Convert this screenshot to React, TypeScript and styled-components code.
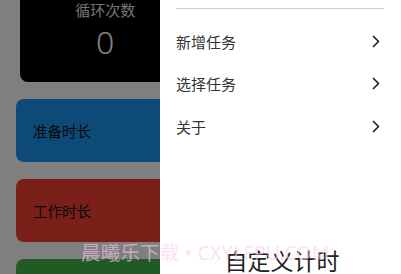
import React from "react";
import styled, { createGlobalStyle } from "styled-components";

const Global = createGlobalStyle`
  html, body { margin: 0; padding: 0; }
  body {
    width: 401px; height: 274px; overflow: hidden; background: #fff;
    font-family: "Noto Sans", "Noto Sans CJK SC", sans-serif;
  }
`;

const Screen = styled.div`
  position: relative;
  width: 401px;
  height: 274px;
  overflow: hidden;
  background: #fff;
`;

const Main = styled.div`
  display: flex;
  flex-direction: column;
  gap: 17px;
  padding: 0 16px;
  margin-top: -12px;
`;

const StatRow = styled.div`
  display: grid;
  grid-template-columns: 1fr 1fr;
  gap: 20px;
  margin: 0 4px;
`;

const StatCard = styled.div`
  height: 94px;
  background: #000;
  border-radius: 8px;
  display: flex;
  flex-direction: column;
  align-items: center;
  padding-top: 12px;
  box-sizing: border-box;
  color: #ffffff;
`;

const StatLabel = styled.div`
  font-size: 15px;
  line-height: 20px;
  opacity: 0.9;
`;

const StatValue = styled.div`
  font-size: 32px;
  line-height: 36px;
  margin-top: 4px;
  font-family: "Noto Sans", sans-serif;
  font-weight: 300;
`;

const PhaseCard = styled.div<{ $bg: string }>`
  height: 63px;
  border-radius: 8px;
  background: ${(p) => p.$bg};
  display: flex;
  align-items: center;
  padding: 0 17px;
  font-size: 14.5px;
  color: #111;
`;

const Dim = styled.div`
  position: absolute;
  inset: 0;
  background: rgba(0, 0, 0, 0.5);
`;

const Watermark = styled.div`
  position: absolute;
  left: 81px;
  top: 240px;
  font-size: 19.5px;
  line-height: 26px;
  color: rgba(250, 205, 238, 0.6);
  white-space: nowrap;
  z-index: 3;
  letter-spacing: 0.2px;
`;

const Drawer = styled.aside`
  position: absolute;
  top: 0;
  right: 0;
  width: 241px;
  height: 274px;
  background: #fff;
  display: flex;
  flex-direction: column;
  padding-top: 8px;
  box-sizing: border-box;
  z-index: 2;
`;

const Divider = styled.div`
  height: 1px;
  background: #cfcfcf;
  margin: 0 17px 0 16px;
`;

const Menu = styled.nav`
  display: flex;
  flex-direction: column;
  margin-top: 11px;
`;

const MenuItem = styled.div`
  height: 42.5px;
  display: flex;
  align-items: center;
  justify-content: space-between;
  padding: 0 21px 0 16px;
  font-size: 15px;
  color: #333;
`;

const Title = styled.div`
  margin-top: auto;
  text-align: center;
  font-size: 23px;
  line-height: 28px;
  color: #222;
  padding-left: 3px;
  margin-bottom: -1px;
`;

const Chevron = () => (
  <svg width="8" height="13" viewBox="0 0 8 13" fill="none">
    <path d="M1.5 1.5 L6.5 6.5 L1.5 11.5" stroke="#222" strokeWidth="1.7" strokeLinecap="round" strokeLinejoin="round" />
  </svg>
);

export default function App() {
  const items = ["新增任务", "选择任务", "关于"];
  return (
    <Screen>
      <Global />
      <Main>
        <StatRow>
          <StatCard>
            <StatLabel>循环次数</StatLabel>
            <StatValue>0</StatValue>
          </StatCard>
          <StatCard>
            <StatLabel>剩余时间</StatLabel>
            <StatValue>0</StatValue>
          </StatCard>
        </StatRow>
        <PhaseCard $bg="#1c94f0">准备时长</PhaseCard>
        <PhaseCard $bg="#f44030">工作时长</PhaseCard>
        <PhaseCard $bg="#42b448" />
      </Main>
      <Dim />
      <Drawer>
        <Divider />
        <Menu>
          {items.map((t) => (
            <MenuItem key={t}>
              <span>{t}</span>
              <Chevron />
            </MenuItem>
          ))}
        </Menu>
        <Title>自定义计时</Title>
      </Drawer>
      <Watermark>晨曦乐下载 • CXYLFPU.COM</Watermark>
    </Screen>
  );
}
